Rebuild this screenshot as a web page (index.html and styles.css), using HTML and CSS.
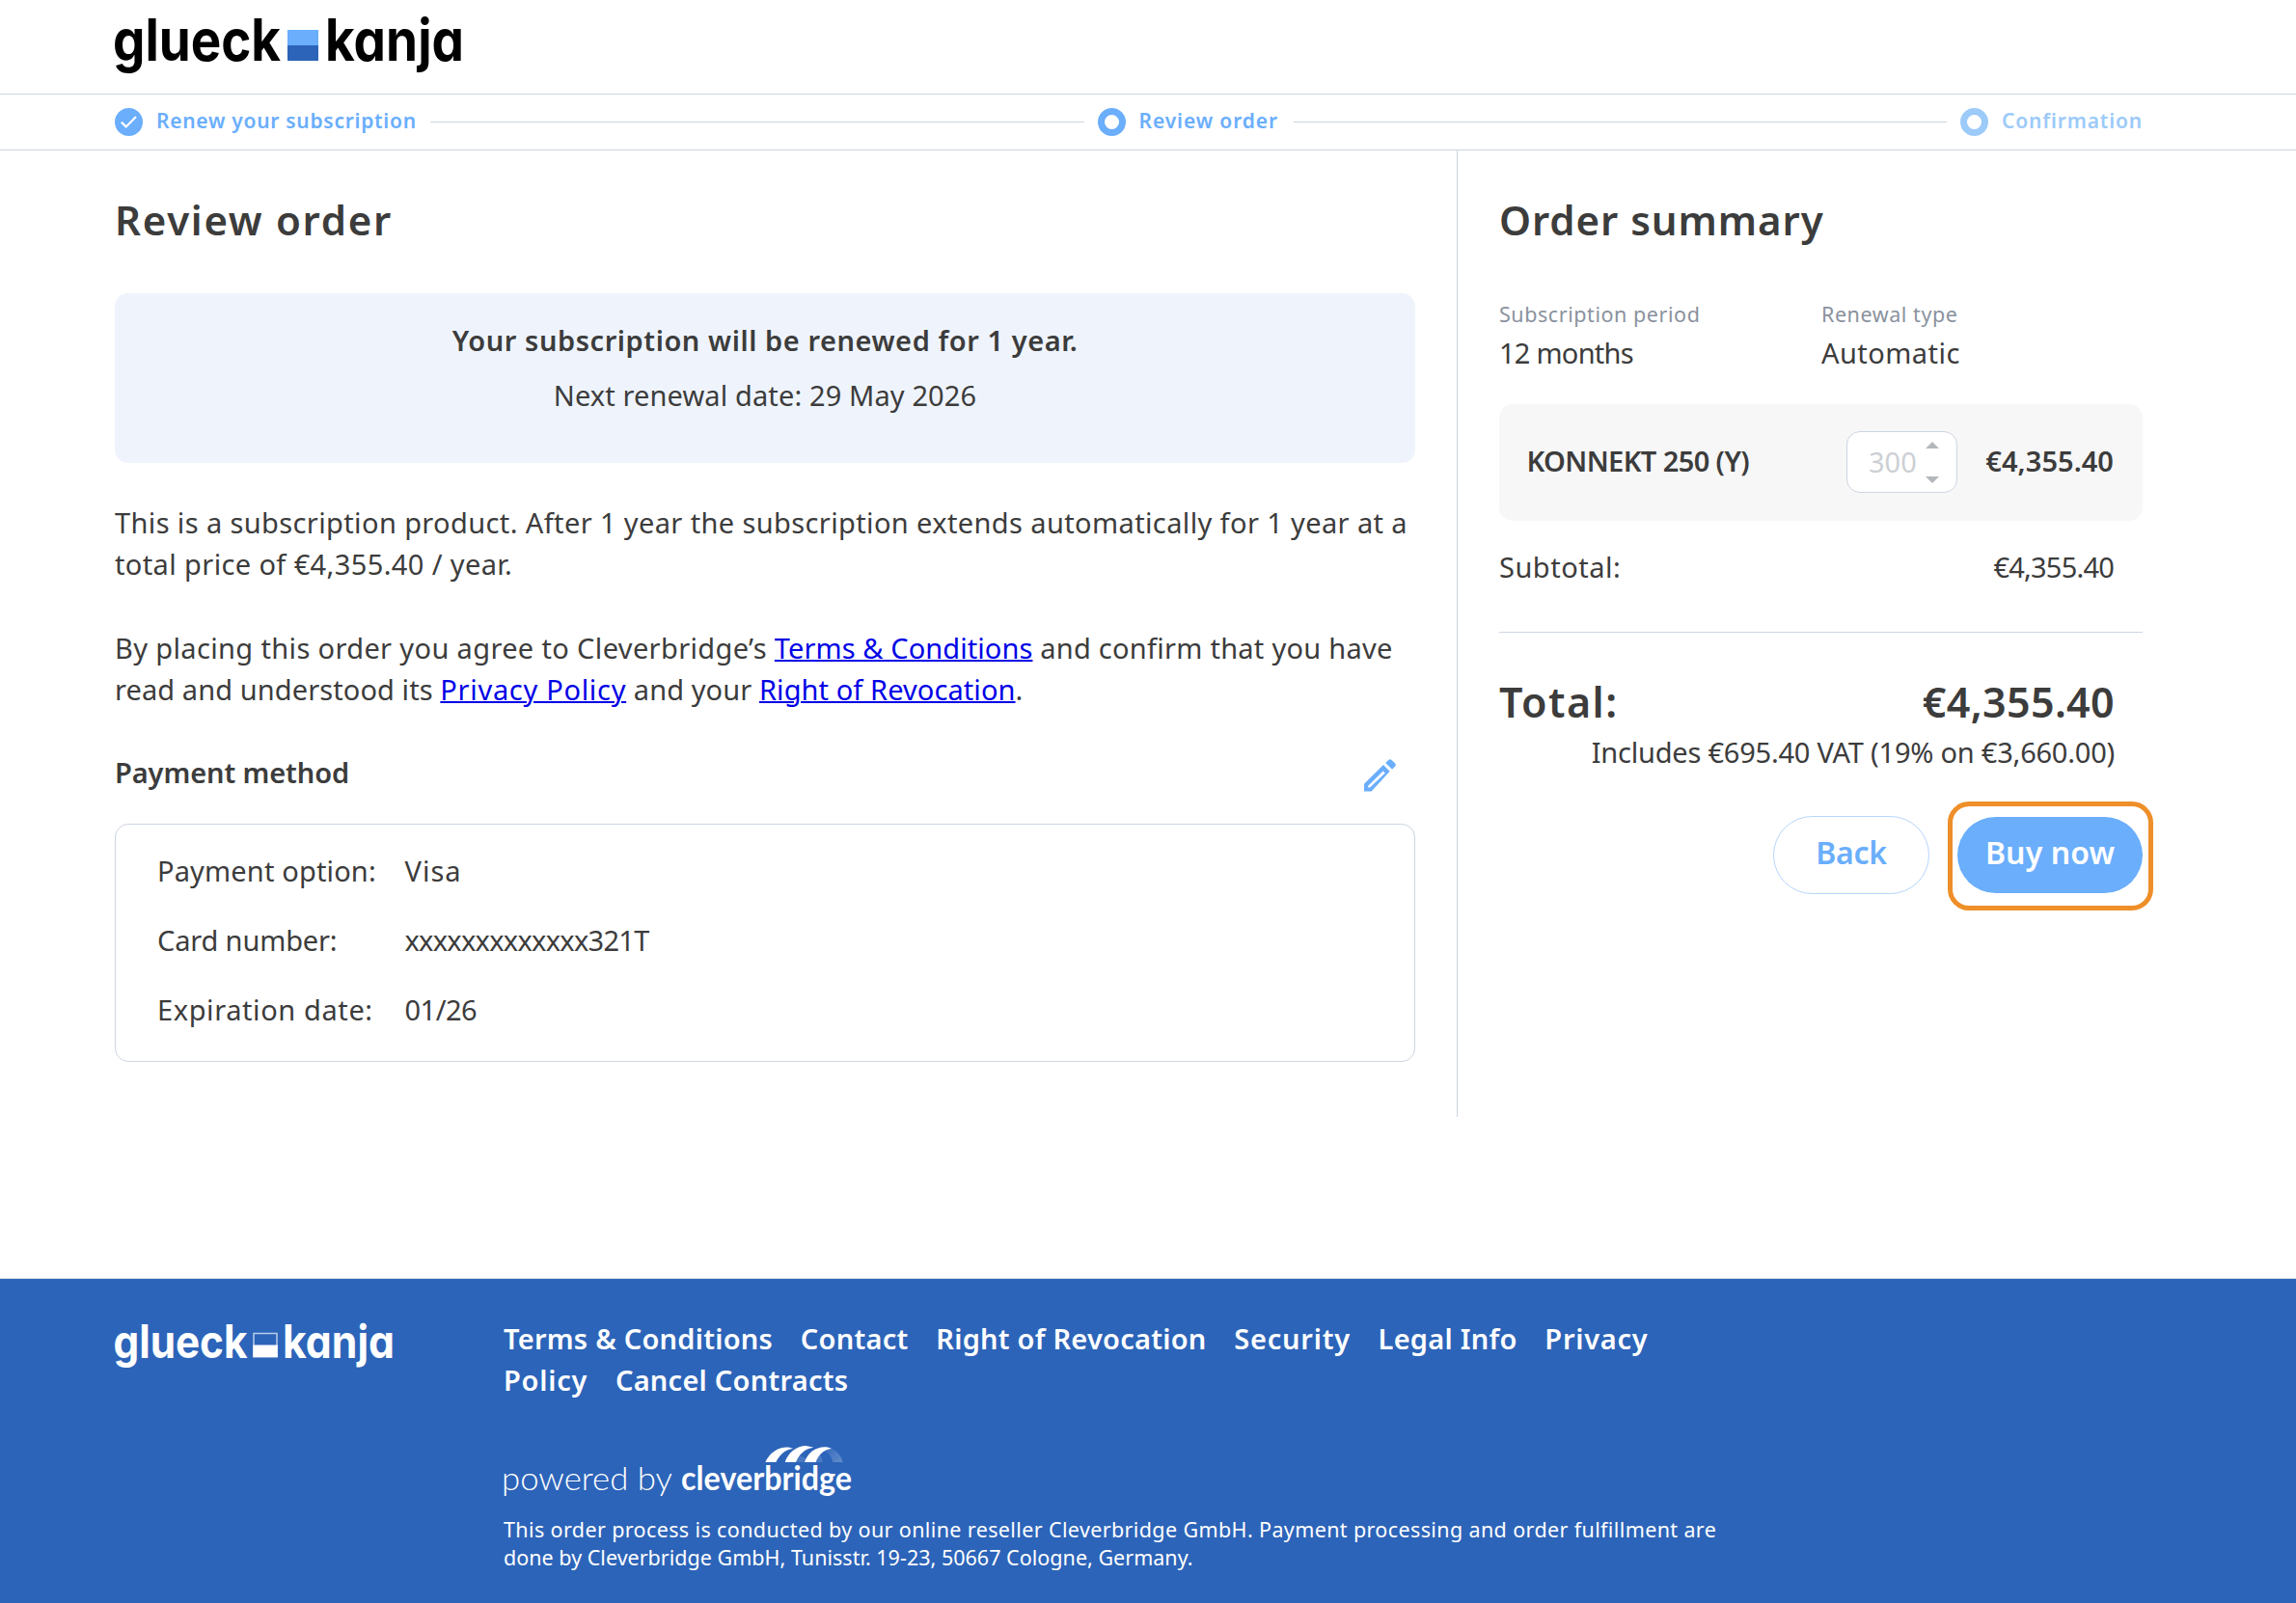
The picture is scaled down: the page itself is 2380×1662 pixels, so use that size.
FILE: index.html
```html
<!DOCTYPE html>
<html lang="en">
<head>
<meta charset="utf-8">
<title>Review order</title>
<link rel="stylesheet" href="styles.css">
</head>
<body>
<header class="header">
  <svg class="logo" width="364" height="80" viewBox="0 0 364 80" role="img" aria-label="glueck kanja">
    <text class="logo-text" x="-2" y="63" textLength="174" lengthAdjust="spacingAndGlyphs">glueck</text>
    <rect x="179" y="31" width="32" height="16" fill="#6aaefc"/>
    <rect x="179" y="47" width="32" height="16" fill="#2c64b9"/>
    <text class="logo-text" x="218" y="63" textLength="144" lengthAdjust="spacingAndGlyphs">kanja</text>
  </svg>
</header>

<nav class="steps">
  <div class="step">
    <svg width="29" height="29" viewBox="0 0 29 29"><circle cx="14.5" cy="14.5" r="14.5" fill="#6aaefc"/><path d="M6.8 14.6l4.9 4.8L22 9" fill="none" stroke="#fff" stroke-width="2.2"/></svg>
    <span class="step-label w-first">Renew your subscription</span>
  </div>
  <div class="step-line"></div>
  <div class="step">
    <svg width="29" height="29" viewBox="0 0 29 29"><circle cx="14.5" cy="14.5" r="11" fill="none" stroke="#6aaefc" stroke-width="7"/></svg>
    <span class="step-label w-second">Review order</span>
  </div>
  <div class="step-line"></div>
  <div class="step step-next">
    <svg width="29" height="29" viewBox="0 0 29 29"><circle cx="14.5" cy="14.5" r="11" fill="none" stroke="#9ccaf9" stroke-width="7"/></svg>
    <span class="step-label w-third">Confirmation</span>
  </div>
</nav>

<main class="main">
  <section class="review">
    <h1 class="title title-review">Review order</h1>
    <div class="banner">
      <p class="banner-strong">Your subscription will be renewed for 1 year.</p>
      <p class="banner-date">Next renewal date: 29 May 2026</p>
    </div>
    <p class="para">This is a subscription product. After 1 year the subscription extends automatically for 1 year at a<br>total price of €4,355.40 / year.</p>
    <p class="para para-terms"><span class="intro">By placing this order you agree to Cleverbridge’s </span><a class="tight" href="#">Terms &amp; Conditions</a> and confirm that you have<br><span class="lead">read and understood its </span><a class="wide" href="#">Privacy Policy</a><span class="lead"> and your </span><a class="tight" href="#">Right of Revocation</a>.</p>
    <div class="pay-head">
      <h2 class="pay-title">Payment method</h2>
      <svg class="pencil" width="34" height="34" viewBox="0 0 34 34" fill="#6aaefc"><path fill-rule="evenodd" d="M0 33.4V25.8L20 6L26.6 12.7L7.6 33.4ZM4 29.3L6 29.6L21.8 14.6L19.6 12.4L4 28Z"/><path d="M22.2 4L25.4 .9Q27-.4 28.6 1L32.2 4.6Q33.6 6.2 32.2 7.6L29.1 10.8Z"/></svg>
    </div>
    <dl class="pay-box">
      <dt>Payment option:</dt><dd class="option">Visa</dd>
      <dt class="card-label">Card number:</dt><dd class="card-no">xxxxxxxxxxxxx321T</dd>
      <dt class="expiry-label">Expiration date:</dt><dd class="expiry">01/26</dd>
    </dl>
  </section>

  <aside class="summary">
    <h1 class="title title-summary">Order summary</h1>
    <div class="facts">
      <div><p class="fact-label">Subscription period</p><p class="fact-value fact-months">12 months</p></div>
      <div><p class="fact-label">Renewal type</p><p class="fact-value">Automatic</p></div>
    </div>
    <div class="product">
      <span class="product-name">KONNEKT 250 (Y)</span>
      <span class="qty"><span class="qty-value">300</span>
        <svg width="14" height="44" viewBox="0 0 14 44" fill="#b4b7bb"><path d="M0 7L7 0l7 7zM0 36h14l-7 7z"/></svg>
      </span>
      <span class="product-price">€4,355.40</span>
    </div>
    <div class="subtotal"><span class="subtotal-label">Subtotal:</span><span class="amount">€4,355.40</span></div>
    <div class="total"><span class="total-label">Total:</span><span class="total-value">€4,355.40</span></div>
    <p class="vat">Includes €695.40 VAT (19% on €3,660.00)</p>
    <div class="actions">
      <button class="btn btn-back">Back</button>
      <div class="buy"><button class="btn btn-buy">Buy now</button><span class="highlight"></span></div>
    </div>
  </aside>
</main>

<footer class="footer">
  <svg class="footer-logo" width="290" height="60" viewBox="0 0 290 60" role="img" aria-label="glueck kanja">
    <text class="footer-logo-text" x="-1.5" y="41.5" textLength="139" lengthAdjust="spacingAndGlyphs">glueck</text>
    <rect x="144" y="16.5" width="24" height="24" fill="none" stroke="#b9cdea" stroke-width="1.5"/>
    <rect x="143.3" y="28.5" width="25.5" height="12.8" fill="#fff"/>
    <text class="footer-logo-text" x="174" y="41.5" textLength="116" lengthAdjust="spacingAndGlyphs">kanja</text>
  </svg>
  <div class="footer-body">
    <div class="links">
      <div class="links-row"><a>Terms &amp; Conditions</a><a>Contact</a><a>Right of Revocation</a><a class="wide">Security</a><a>Legal Info</a><a class="wide">Privacy</a></div>
      <div class="links-row"><a class="wide">Policy</a><a>Cancel Contracts</a></div>
    </div>
    <svg class="powered" width="364" height="60" viewBox="0 0 364 60">
      <defs><linearGradient id="fade" x1="0" x2="1" y1="0" y2="1"><stop offset="0" stop-color="#fff" stop-opacity=".04"/><stop offset="1" stop-color="#fff" stop-opacity=".26"/></linearGradient></defs>
      <g transform="translate(258 -10) scale(.3333)">
        <path fill="url(#fade)" d="M236 48C258 52 275 70 281 93H250C247 79 240 66 228 60Z"/>
        <path fill="#fff" opacity=".14" d="M146 72L166 82L162 93H135ZM208 70C214 76 218 84 219 93H197Z"/>
        <path fill="#fff" d="M40 93C55 62 82 44 115 47L127 51C100 54 85 70 73 93ZM101 93C112 62 137 42 167 42L190 47C162 50 145 70 135 93ZM162 93C172 65 195 46 225 46C233 46 240 48 246 51C222 54 205 70 197 93Z"/>
      </g>
      <text class="powered-light" x="-2" y="49.5" textLength="177" lengthAdjust="spacingAndGlyphs">powered by</text>
      <text class="powered-bold" x="184" y="49.5" textLength="177" lengthAdjust="spacingAndGlyphs">cleverbridge</text>
    </svg>
    <p class="legal">This order process is conducted by our online reseller Cleverbridge GmbH. Payment processing and order fulfillment are<br><span class="legal-address">done by Cleverbridge GmbH, Tunisstr. 19-23, 50667 Cologne, Germany.</span></p>
  </div>
</footer>
</body>
</html>
```
FILE: styles.css
```css
* { box-sizing: border-box; }
body {
  margin: 0;
  background: #fff;
  color: #3c3c3c;
  font: 400 29px/43.4px "Noto Sans", sans-serif;
  white-space: nowrap;
}
h1, h2, p, dl, dd { margin: 0; }
svg { display: block; flex: none; overflow: visible; }

.header { height: 98px; padding-left: 119px; border-bottom: 1px solid #cdd5e0; }
.logo-text { font: 650 60px Inter, sans-serif; font-feature-settings: "cv11"; fill: #000; }

.steps {
  display: flex;
  align-items: center;
  height: 58px;
  padding: 0 159px 0 119px;
  border-bottom: 1px solid #cdd5e0;
}
.step { display: flex; align-items: center; gap: 14px; color: #6aaefc; }
.step-next { color: #9ccaf9; }
.step-label { padding-bottom: 3px; font-size: 21px; line-height: 32px; font-weight: 600; letter-spacing: .72px; }
.w-first { width: 269px; }
.w-second { width: 145px; letter-spacing: .9px; }
.w-third { width: 146px; letter-spacing: .85px; }
.step-line { flex: 1; height: 1px; margin: 0 14px 0 15px; background: #cdd5e0; }

.main { display: flex; height: 1169px; }
.review { width: 1511px; height: 1002px; padding: 43px 43px 0 119px; border-right: 1px solid #cdd5e0; }
.title { font-size: 42px; line-height: 57px; font-weight: 600; }
.title-review { letter-spacing: 1.7px; }
.title-summary { letter-spacing: .95px; }

.banner {
  height: 176px;
  margin: 48px 0 40px;
  padding-top: 27px;
  border-radius: 14px;
  background: #eff4fc;
  text-align: center;
}
.banner-strong { font-weight: 600; letter-spacing: .56px; }
.banner-date { margin-top: 13.8px; letter-spacing: .12px; }

.para { margin-bottom: 43.2px; letter-spacing: .38px; }
.para-terms { margin-bottom: 42px; letter-spacing: .26px; }
.para a { color: #0000e6; text-decoration-thickness: 2px; }
.para .tight { letter-spacing: .08px; }
.para .wide { letter-spacing: .7px; }
.intro { letter-spacing: .36px; }
.lead { letter-spacing: .09px; }

.pay-head { display: flex; justify-content: space-between; align-items: flex-start; padding-right: 19px; }
.pay-title { font-size: 29px; font-weight: 600; letter-spacing: -.1px; }
.pencil { margin-top: 8px; }
.pay-box {
  display: grid;
  grid-template-columns: 256.5px 1fr;
  row-gap: 28.8px;
  align-content: start;
  height: 247px;
  margin-top: 31.3px;
  padding: 26.3px 0 0 43px;
  border: 1px solid #cdd5e0;
  border-radius: 14px;
  letter-spacing: .15px;
}
.option { letter-spacing: 1px; }
.card-label { letter-spacing: -.15px; }
.card-no { letter-spacing: -.72px; }
.expiry-label { letter-spacing: .6px; }
.expiry { letter-spacing: -.5px; }

.summary { width: 710px; padding: 43px 0 0 43px; }
.facts { display: grid; grid-template-columns: 334px 1fr; margin-top: 54px; }
.fact-label { color: #8a929e; font-size: 21.5px; line-height: 32px; letter-spacing: .56px; }
.fact-value { margin-top: 2px; letter-spacing: .45px; }
.fact-months { letter-spacing: -.75px; }
.product {
  display: flex;
  align-items: center;
  height: 121px;
  margin-top: 31.5px;
  padding: 0 30px 0 28.5px;
  border-radius: 14px;
  background: #f7f7f7;
  font-weight: 600;
}
.product-name { flex: 1; padding-bottom: 3px; letter-spacing: -.6px; }
.qty {
  display: flex;
  align-items: center;
  justify-content: space-between;
  width: 115px;
  height: 64px;
  margin-right: 29px;
  padding: 0 18px 0 22px;
  border: 1px solid #cdd5e0;
  border-radius: 14px;
  background: #fff;
  font-weight: 400;
}
.qty-value { padding-bottom: 2px; color: #cdd0d4; }
.qty svg { margin-top: 1px; }
.product-price { width: 133px; padding-bottom: 3px; text-align: right; letter-spacing: .05px; }
.subtotal {
  display: flex;
  justify-content: space-between;
  height: 116px;
  padding: 26.5px 30px 0 0;
  border-bottom: 1px solid #cdd5e0;
}
.subtotal-label { letter-spacing: .5px; }
.amount { letter-spacing: -.8px; }
.total {
  display: flex;
  justify-content: space-between;
  margin-top: 44.5px;
  padding-right: 29px;
  font-size: 43px;
  line-height: 56px;
  font-weight: 600;
}
.total-label { letter-spacing: 1.5px; }
.total-value { letter-spacing: .35px; }
.vat { margin-top: 2px; padding-right: 29px; text-align: right; letter-spacing: -.22px; }
.actions { display: flex; justify-content: flex-end; align-items: center; gap: 29px; margin-top: 44px; }
.btn { padding: 0 0 4px; border: 0; font: 600 32px/44px "Noto Sans", sans-serif; letter-spacing: -.3px; }
.btn-back { width: 162px; height: 81px; border: 1px solid #b5d6fd; border-radius: 41px; background: #fff; color: #6aaefc; }
.btn-buy { display: block; width: 192px; height: 79px; border-radius: 40px; background: #6aaefc; color: #fff; letter-spacing: .1px; }
.buy { position: relative; }
.highlight { position: absolute; inset: -16px -11px -18px -10px; border: 5px solid #ee8f29; border-radius: 22px; }

.footer {
  display: flex;
  height: 337px;
  padding: 40px 0 0 119px;
  border-top: 1px solid #d5dae3;
  background: #2c64b9;
  color: #fff;
}
.footer-logo { margin-right: 113px; }
.footer-logo-text { font: 650 47.5px Inter, sans-serif; font-feature-settings: "cv11"; fill: #fff; }
.links-row { display: flex; gap: 28.8px; font-weight: 600; letter-spacing: .24px; }
.links-row .wide { letter-spacing: .75px; }
.powered { margin: 42px 0 16px 0; }
.powered-light { font: 300 34px Lato, sans-serif; fill: #fff; }
.powered-bold { font: 700 34px Lato, sans-serif; fill: #fff; }
.legal { font-size: 21.5px; line-height: 29.2px; letter-spacing: .38px; }
.legal-address { letter-spacing: .02px; }
```
